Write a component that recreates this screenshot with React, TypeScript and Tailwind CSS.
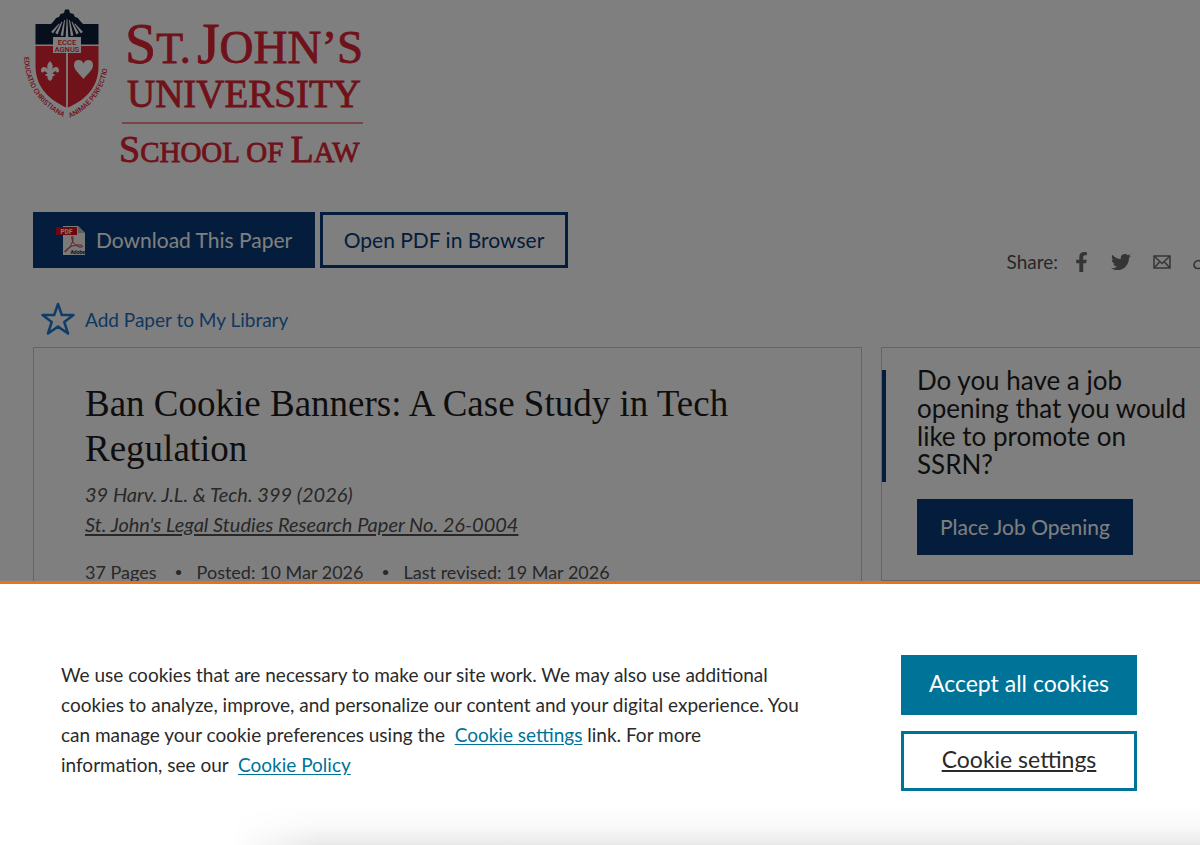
import type { ReactNode } from "react";
import { FaFacebookF, FaTwitter } from "react-icons/fa";

const RED = "#e02434";

function UniversityLogo() {
  return (
    <svg
      className="block h-[168px] w-[350px] overflow-visible"
      viewBox="0 0 350 168"
      role="img"
      aria-label="St. John's University School of Law"
    >
      <defs>
        <path id="motto-left" d="M9 57 C10 82 20 103 50 118" />
        <path id="motto-right" d="M55 118 C79 107 93 85 94 56" />
      </defs>
      <g>
        <path d="M20.500 46 H83.500 V66 C83.500 88 70 100 52 108 C35 100 20.500 88 20.500 66 Z" fill={RED} />
        <path
          d="M20.500 24 H37 L39 21 L41 18 L44 17 L45.500 14 L49 13 L50 9.500 H54 L55 13 L58.500 14 L60 17 L63 18 L65 21 L67 24 H83.500 V44.500 H20.500 Z"
          fill="#101f38"
        />
        <path d="M36 24 L40 20 L52 30 L64 20 L68 24 L63 33 H41 Z" fill="#101f38" />
        <path d="M52 46 V108" stroke="#ffffff" strokeWidth="1.800" />
        <g fill="#ffffff">
          <path d="M51.600 19 H52.400 L53.300 37 H50.700 Z" />
          <path d="M49.200 20 L50 20.200 L48.200 36 L45.600 35.400 Z" />
          <path d="M54.800 20 L54 20.200 L55.800 36 L58.400 35.400 Z" />
          <path d="M46.800 21.400 L47.500 21.900 L42.600 34.500 L40.300 33 Z" />
          <path d="M57.200 21.400 L56.500 21.900 L61.400 34.500 L63.700 33 Z" />
          <path d="M44 23.500 L44.600 24.100 L38 33.500 L36.200 31.800 Z" />
          <path d="M60 23.500 L59.400 24.100 L66 33.500 L67.800 31.800 Z" />
        </g>
        <rect x="38" y="37" width="28" height="16" fill="#ffffff" />
        <g
          fill={RED}
          fontFamily="Roboto, sans-serif"
          fontWeight="500"
          fontSize="7.500"
          textAnchor="middle"
        >
          <text x="52" y="44.500">ECCE</text>
          <text x="52" y="51.500">AGNUS</text>
        </g>
        <path
          d="M35 61 C38 64 38.500 67 37 70 C38.500 66 44.500 66 44 71 C43.500 73 41.500 73 41 71.500 C40 71 38.500 72 37.500 74 H39.500 V76 H37.500 C38 78 37 80 35 81 C33 80 32 78 32.500 76 H30.500 V74 H32.500 C31.500 72 30 71 29 71.500 C28.500 73 26.500 73 26 71 C25.500 66 31.500 66 33 70 C31.500 67 32 64 35 61 Z"
          fill="#ffffff"
        />
        <path
          d="M68.500 79 C65 74 58.500 70 59 64.500 C59.500 59 66.500 58.500 68.500 63.500 C70.500 58.500 77.500 59 78 64.500 C78.500 70 72 74 68.500 79 Z"
          fill="#ffffff"
        />
        <g fill={RED} fontFamily="Roboto, sans-serif" fontWeight="500" fontSize="7">
          <text>
            <textPath href="#motto-left">EDUCATIO CHRISTIANA</textPath>
          </text>
          <text>
            <textPath href="#motto-right">ANIMAE PERFECTIO</textPath>
          </text>
        </g>
      </g>
      <g fill={RED} stroke={RED} strokeWidth="0.800" fontFamily="'Liberation Serif', serif">
        <text x="110" y="63" fontSize="56">
          S<tspan fontSize="44">T.</tspan>
        </text>
        <text x="182" y="63" fontSize="58">
          J<tspan fontSize="47">OHN’S</tspan>
        </text>
        <text x="112" y="107" fontSize="39">
          UNIVERSITY
        </text>
        <text x="104" y="162" fontSize="38">
          S<tspan fontSize="29">CHOOL OF </tspan>
          <tspan>L</tspan>
          <tspan fontSize="29">AW</tspan>
        </text>
      </g>
      <path d="M107 123 H348" stroke={RED} strokeWidth="1.500" opacity="0.700" />
    </svg>
  );
}

function PdfIcon() {
  return (
    <svg className="h-[31px] w-[31px] shrink-0 overflow-visible" viewBox="0 0 31 31" aria-hidden="true">
      <path d="M8 1 H23 L30 8 V30 H8 Z" fill="#f4f4f4" />
      <path d="M23 1 V8 H30 Z" fill="#bdbdbd" />
      <rect x="1" y="2" width="21" height="8" fill="#d80f1c" />
      <text x="5.500" y="8.500" fontSize="6.500" fontWeight="700" fontFamily="Roboto, sans-serif" fill="#ffffff">
        PDF
      </text>
      <path
        d="M10 27 C14 25 18 18 18 13 C18 10 16 11 17 14 C18 19 23 23 27 22 C29 21 27 20 23 20 C18 20 12 23 10 26 Z"
        fill="none"
        stroke="#e0303a"
        strokeWidth="1"
      />
      <text x="15.500" y="29" fontSize="5" fontWeight="700" fontFamily="Roboto, sans-serif" fill="#222222">
        Adobe
      </text>
    </svg>
  );
}

function StarIcon() {
  return (
    <svg className="h-[34px] w-[34px] shrink-0" viewBox="0 0 34 34" aria-hidden="true">
      <path
        d="M17 2 L20.800 13 H32.500 L23.300 20 L27 31.500 L17 24.600 L7 31.500 L10.700 20 L1.500 13 H13.200 Z"
        fill="none"
        stroke="#1f7ad1"
        strokeWidth="2.500"
        strokeLinejoin="round"
      />
    </svg>
  );
}

function MailIcon() {
  return (
    <svg className="h-[14px] w-[18px]" viewBox="0 0 18 14" aria-hidden="true">
      <g fill="none" stroke="#6a6a6a" strokeWidth="1.500">
        <rect x="1" y="1" width="16" height="12" />
        <path d="M1.500 1.500 L9 8.500 L16.500 1.500" />
        <path d="M1.500 12.500 L6.500 7" />
        <path d="M16.500 12.500 L11.500 7" />
      </g>
    </svg>
  );
}

function LinkIcon() {
  return (
    <svg className="h-5 w-5" viewBox="0 0 20 20" aria-hidden="true">
      <g fill="none" stroke="#6a6a6a" strokeWidth="1.600" strokeLinecap="round">
        <path d="M8 10 C6 7 1 9 1 13 C1 17 7 18 9 14 L11 12" />
        <path d="M9 11 C11 14 15 12 18 8 C20 4 15 1 12 4 L10 6" />
      </g>
    </svg>
  );
}

function ShareLink({ label, children }: { label: string; children: ReactNode }) {
  return (
    <a href="#share" aria-label={label} className="shrink-0 text-[#6a6a6a]">
      {children}
    </a>
  );
}

function MetaItem({ children }: { children: ReactNode }) {
  return (
    <li className="flex items-center gap-3.5">
      <span aria-hidden="true" className="text-sm">•</span>
      {children}
    </li>
  );
}

function CookieBanner() {
  return (
    <section
      aria-label="Cookie consent"
      className="fixed inset-x-0 bottom-0 border-t-[3px] border-[#e9711c] bg-white"
    >
      <div className="flex items-start justify-between pt-[71px] pr-[63px] pb-[54px] pl-[61px]">
        <p className="mt-[5px] w-[742px] text-[19px] leading-[30px] text-[#2a2a2a]">
          We use cookies that are necessary to make our site work. We may also use additional
          cookies to analyze, improve, and personalize our content and your digital experience. You
          can manage your cookie preferences using the&nbsp;{" "}
          <a href="#settings" className="text-[#007398] underline underline-offset-2">
            Cookie settings
          </a>{" "}
          link. For more information, see our&nbsp;{" "}
          <a href="#policy" className="text-[#007398] underline underline-offset-2">
            Cookie Policy
          </a>
        </p>
        <div className="flex w-[236px] shrink-0 flex-col gap-4 text-[23px]">
          <button type="button" className="h-[60px] bg-[#007398] pb-1 text-white">
            Accept all cookies
          </button>
          <button
            type="button"
            className="h-[60px] border-[3px] border-[#007398] bg-white pb-1 text-[#2a2a2a] underline underline-offset-2"
          >
            Cookie settings
          </button>
        </div>
      </div>
      <div className="-mt-10 ml-[230px] h-10 bg-linear-to-b from-white via-[#fafafa] to-[#eaeaea] mask-l-from-91%" />
    </section>
  );
}

export default function App() {
  return (
    <div className="h-screen overflow-hidden bg-white font-['Lato',sans-serif]">
      <main className="pl-[33px]">
        <header className="-ml-[18px]">
          <UniversityLogo />
        </header>

        <div className="mt-11 flex items-start justify-between">
          <div className="flex gap-[5px] text-[21px]">
            <button
              type="button"
              className="flex h-14 w-[282px] items-center gap-2.5 bg-[#083a78] pl-[22px] text-white"
            >
              <PdfIcon />
              Download This Paper
            </button>
            <button
              type="button"
              className="h-14 w-[248px] border-[3px] border-[#083a78] text-[#083a78]"
            >
              Open PDF in Browser
            </button>
          </div>
          <div className="mt-9 -mr-[13px] flex items-center text-[19px] text-[#505050]">
            <span className="mr-4">Share:</span>
            <div className="flex items-center gap-[22px]">
              <ShareLink label="Facebook">
                <FaFacebookF className="h-5 w-[15px]" />
              </ShareLink>
              <ShareLink label="Twitter">
                <FaTwitter className="h-5 w-5" />
              </ShareLink>
              <ShareLink label="Email">
                <MailIcon />
              </ShareLink>
              <ShareLink label="Copy link">
                <LinkIcon />
              </ShareLink>
            </div>
          </div>
        </div>

        <a href="#library" className="mt-6 ml-2 flex h-9 w-fit items-center gap-2.5 text-[19px] text-[#1f6fbe]">
          <StarIcon />
          <span className="pt-1">Add Paper to My Library</span>
        </a>

        <div className="mt-2.5 flex items-start gap-[19px]">
          <article className="h-[320px] flex-1 border border-[#c8c8c8] px-[51px] pt-[33px] text-[#505050]">
            <h1 className="font-['Liberation_Serif',serif] text-[37px] leading-[45px] text-[#1c1c1c]">
              Ban Cookie Banners: A Case Study in Tech Regulation
            </h1>
            <div className="mt-2 text-xl leading-[30px] italic">
              <p>39 Harv. J.L. &amp; Tech. 399 (2026)</p>
              <p>
                <a href="#series" className="underline underline-offset-2">
                  St. John's Legal Studies Research Paper No. 26-0004
                </a>
              </p>
            </div>
            <ul className="mt-[18px] flex gap-[18px] text-lg leading-[30px]">
              <li>37 Pages</li>
              <MetaItem>Posted: 10 Mar 2026</MetaItem>
              <MetaItem>Last revised: 19 Mar 2026</MetaItem>
            </ul>
          </article>

          <aside className="h-[234px] w-[319px] shrink-0 border border-r-0 border-[#c8c8c8] pt-[22px]">
            <div className="flex h-28 items-start border-l-4 border-[#083a78] pl-[31px]">
              <h2 className="-mt-1 text-[26px] leading-7 text-[#1c1c1c]">
                Do you have a job opening that you would like to promote on SSRN?
              </h2>
            </div>
            <button
              type="button"
              className="mt-[17px] ml-[35px] h-14 w-[216px] bg-[#083a78] text-[21px] text-white"
            >
              Place Job Opening
            </button>
          </aside>
        </div>
      </main>
      <div className="fixed inset-0 bg-black/50" />
      <CookieBanner />
    </div>
  );
}
